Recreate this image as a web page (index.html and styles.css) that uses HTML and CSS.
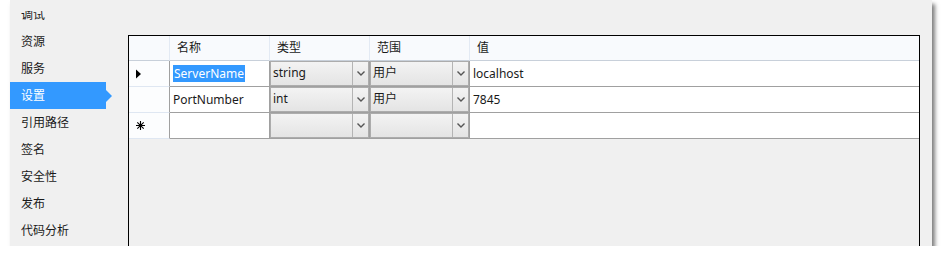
FILE: index.html
```html
<!DOCTYPE html>
<html lang="zh-CN">
<head>
    <meta charset="UTF-8">
    <title>设置</title>
    <link rel="stylesheet" href="styles.css">
</head>
<body>
<div class="window">
    <nav class="tabs">
        <ul class="tab-list">
            <li>调试</li>
            <li>资源</li>
            <li>服务</li>
            <li class="active">设置</li>
            <li>引用路径</li>
            <li>签名</li>
            <li>安全性</li>
            <li>发布</li>
            <li>代码分析</li>
        </ul>
    </nav>

    <section class="panel">
        <div class="grid">
            <div class="row head">
                <div class="rh"></div>
                <div class="hc">名称</div>
                <div class="hc">类型</div>
                <div class="hc">范围</div>
                <div class="hc last">值</div>
            </div>

            <div class="row">
                <div class="rh">
                    <svg width="5" height="10" viewBox="0 0 5 10"><path d="M0 0.5 L5 5 L0 9.5 Z" fill="#000"/></svg>
                </div>
                <div class="cell"><span class="sel">ServerName</span></div>
                <div class="cell combo-cell"><div class="combo"><span class="combo-text">string</span><span class="drop"><svg width="8" height="5" viewBox="0 0 8 5"><path d="M0.5 0.5 L4 4 L7.5 0.5" fill="none" stroke="#555" stroke-width="1.4"/></svg></span></div></div>
                <div class="cell combo-cell"><div class="combo"><span class="combo-text">用户</span><span class="drop"><svg width="8" height="5" viewBox="0 0 8 5"><path d="M0.5 0.5 L4 4 L7.5 0.5" fill="none" stroke="#555" stroke-width="1.4"/></svg></span></div></div>
                <div class="cell last">localhost</div>
            </div>

            <div class="row">
                <div class="rh"></div>
                <div class="cell">PortNumber</div>
                <div class="cell combo-cell"><div class="combo"><span class="combo-text">int</span><span class="drop"><svg width="8" height="5" viewBox="0 0 8 5"><path d="M0.5 0.5 L4 4 L7.5 0.5" fill="none" stroke="#555" stroke-width="1.4"/></svg></span></div></div>
                <div class="cell combo-cell"><div class="combo"><span class="combo-text">用户</span><span class="drop"><svg width="8" height="5" viewBox="0 0 8 5"><path d="M0.5 0.5 L4 4 L7.5 0.5" fill="none" stroke="#555" stroke-width="1.4"/></svg></span></div></div>
                <div class="cell last">7845</div>
            </div>

            <div class="row">
                <div class="rh">
                    <svg width="9" height="9" viewBox="0 0 9 9"><path d="M0 4.5 H9 M4.5 0 V9 M1.3 1.3 L7.7 7.7 M7.7 1.3 L1.3 7.7" stroke="#000" stroke-width="1.1"/></svg>
                </div>
                <div class="cell"></div>
                <div class="cell combo-cell"><div class="combo"><span class="combo-text"></span><span class="drop"><svg width="8" height="5" viewBox="0 0 8 5"><path d="M0.5 0.5 L4 4 L7.5 0.5" fill="none" stroke="#555" stroke-width="1.4"/></svg></span></div></div>
                <div class="cell combo-cell"><div class="combo"><span class="combo-text"></span><span class="drop"><svg width="8" height="5" viewBox="0 0 8 5"><path d="M0.5 0.5 L4 4 L7.5 0.5" fill="none" stroke="#555" stroke-width="1.4"/></svg></span></div></div>
                <div class="cell last"></div>
            </div>
        </div>
    </section>
</div>
</body>
</html>
```

FILE: styles.css
```css
/* project properties window */

body {
    margin: 0;
    background: #fff;
    font-family: "Noto Sans", "Noto Sans CJK SC", sans-serif;
    font-size: 12px;
    color: #1a1a1a;
}

.window {
    margin-left: 10px;
    width: 922px;
    height: 246px;
    background: #f0f0f0;
    box-shadow: 3px 4px 4px rgba(0, 0, 0, 0.5);
    display: flex;
}

/* left tab list, scrolled so the first item is cut */
.tabs {
    width: 96px;
    margin-top: 11px;
    clip-path: inset(0 -20px 0 0);
    flex-shrink: 0;
}

.tab-list {
    list-style: none;
    margin: -10px 0 0 0;
    padding: 0;
}

.tab-list li {
    height: 27px;
    line-height: 27px;
    padding-left: 11px;
    position: relative;
}

.tab-list li.active {
    background: #3399ff;
    color: #fff;
}

.tab-list li.active::after {
    content: "";
    position: absolute;
    left: 96px;
    top: 8px;
    border-top: 6px solid transparent;
    border-bottom: 6px solid transparent;
    border-left: 6px solid #3399ff;
}

/* settings grid */
.panel {
    margin: 35px 0 0 22px;
    width: 792px;
    box-sizing: border-box;
    border: 1px solid #000;
    border-bottom: none;
}

.row {
    display: grid;
    grid-template-columns: 41px 100px 100px 100px 1fr;
    height: 26px;
}

.row.head {
    height: 25px;
    background: #f8fafd;
}

.rh {
    box-sizing: border-box;
    border-right: 1px solid #a0a0a0;
    border-bottom: 1px solid #dfe7f2;
    background: #fcfdfe;
    display: flex;
    align-items: center;
    padding-left: 7px;
}

.head .rh {
    border-right: 1px solid #e3eaf4;
    border-bottom: 1px solid #c8d0da;
    background: #f8fafd;
}

.hc {
    box-sizing: border-box;
    border-right: 1px solid #e3eaf4;
    border-bottom: 1px solid #c8d0da;
    padding-left: 7px;
    line-height: 23px;
}

.cell {
    box-sizing: border-box;
    background: #fff;
    border-right: 1px solid #a0a0a0;
    border-bottom: 1px solid #a0a0a0;
    padding-left: 3px;
    line-height: 25px;
    white-space: nowrap;
}

.hc.last,
.cell.last {
    border-right: none;
}

.sel {
    background: #3399ff;
    color: #fff;
    padding: 0 1px;
}

.combo-cell {
    padding: 0;
    background: #f0f0f0;
}

.combo {
    box-sizing: border-box;
    height: 25px;
    border: 1px solid #acacac;
    background: linear-gradient(#f3f3f3, #e4e4e4);
    display: flex;
}

.combo-text {
    flex: 1;
    padding-left: 2px;
    line-height: 22px;
}

.drop {
    width: 15px;
    border-left: 1px solid #b4b4b4;
    display: flex;
    align-items: center;
    justify-content: center;
}
```
